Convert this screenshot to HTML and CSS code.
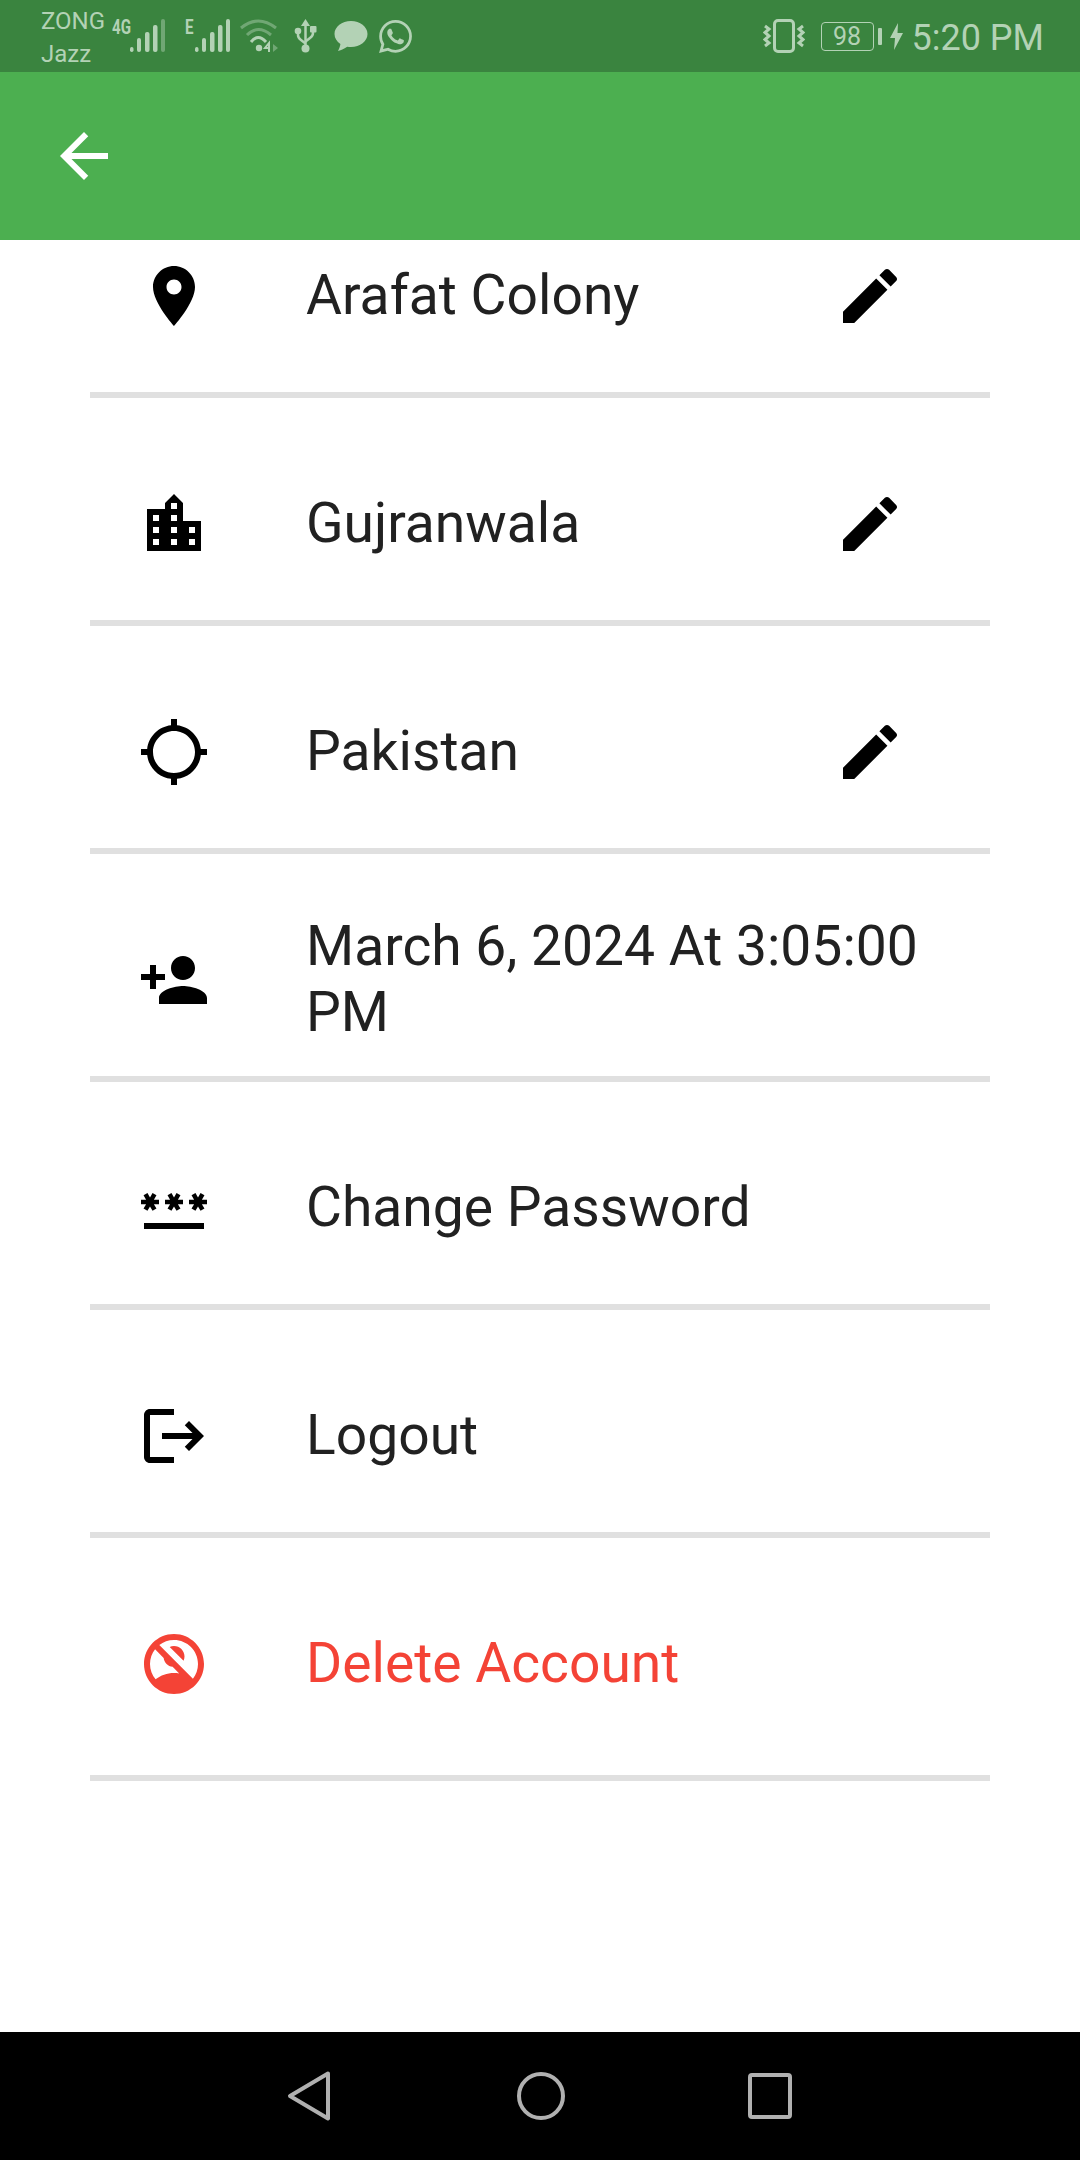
FILE: index.html
```html
<!DOCTYPE html>
<html lang="en">
  <head>
    <meta charset="UTF-8" />
    <meta name="viewport" content="width=device-width, initial-scale=1.0" />
    <title>Profile</title>
    <link rel="stylesheet" href="styles.css">
  </head>
  <body>
    <div class="screen">
      <!-- status bar -->
      <div class="status-bar">
        <div class="carrier">
          <span>ZONG</span>
          <span>Jazz</span>
        </div>
        <span class="net-type net-4g">4G</span>
        <svg width="35" height="34" viewBox="0 0 35 34">
          <rect x="0" y="28" width="3.500" height="5" rx="1.700" />
          <rect x="7" y="19" width="4" height="14" rx="2" />
          <rect x="15" y="13" width="4.500" height="20" rx="2" />
          <rect x="23" y="6" width="4.500" height="27" rx="2" />
          <rect x="31" y="0" width="4" height="33" rx="2" opacity="0.45" />
        </svg>
        <span class="net-type net-e">E</span>
        <svg class="sb-signal-b" width="35" height="34" viewBox="0 0 35 34">
          <rect x="0" y="28" width="3.500" height="5" rx="1.700" />
          <rect x="7" y="19" width="4" height="14" rx="2" />
          <rect x="15" y="13" width="4.500" height="20" rx="2" />
          <rect x="23" y="6" width="4.500" height="27" rx="2" />
          <rect x="31" y="0" width="4" height="33" rx="2" />
        </svg>
        <svg class="sb-wifi" width="38" height="34" viewBox="0 0 38 34">
          <g fill="none" stroke-width="3" class="sb-stroke">
            <path d="M1 9Q18 -5 36 9" opacity="0.45" />
            <path d="M7 16Q18 5 31 16" opacity="0.45" />
            <path d="M11 23Q18 14 26 23" />
          </g>
          <circle cx="19" cy="29" r="3.200" />
          <path d="M29 24v5h-4zM29 29v4" fill="none" stroke-width="2" class="sb-stroke" />
          <path d="M33 25l5 4-5 4z" opacity="0.45" />
        </svg>
        <svg class="sb-usb" width="23" height="34" viewBox="0 0 23 34">
          <path d="M11.500 0L16 7H7z" />
          <g fill="none" stroke-width="2.500" class="sb-stroke">
            <path d="M11.500 5v24" />
            <path d="M4 13v3q0 3 3 5l4.500 3.500" />
            <path d="M19 11v3q0 3-3 5l-4.500 3.500" />
          </g>
          <circle cx="4" cy="12" r="3.300" />
          <rect x="16" y="7" width="6.500" height="6.500" rx="1" />
          <circle cx="11.500" cy="29.500" r="4" />
        </svg>
        <svg class="sb-bubble" width="34" height="34" viewBox="0 0 33 34">
          <path d="M16.500 2C7.400 2 0 7.800 0 15c0 4 2.300 7.600 5.900 10-.3 2.300-1.200 4.800-2.400 7 3.300-.6 6.700-2.600 9.200-4.300 1.200.2 2.500.3 3.800.3C25.600 28 33 22.200 33 15S25.600 2 16.500 2z" />
        </svg>
        <svg class="sb-whatsapp" width="33" height="33" viewBox="0 0 24 24">
          <path d="M17.472 14.382c-.297-.149-1.758-.867-2.030-.967-.273-.099-.471-.148-.670.150-.197.297-.767.966-.940 1.164-.173.199-.347.223-.644.075-.297-.150-1.255-.463-2.390-1.475-.883-.788-1.480-1.761-1.653-2.059-.173-.297-.018-.458.130-.606.134-.133.298-.347.446-.520.149-.174.198-.298.298-.497.099-.198.050-.371-.025-.520-.075-.149-.669-1.612-.916-2.207-.242-.579-.487-.500-.669-.510-.173-.008-.371-.010-.570-.010-.198 0-.520.074-.792.372-.272.297-1.040 1.016-1.040 2.479 0 1.462 1.065 2.875 1.213 3.074.149.198 2.096 3.200 5.077 4.487.709.306 1.262.489 1.694.625.712.227 1.360.195 1.871.118.571-.085 1.758-.719 2.006-1.413.248-.694.248-1.289.173-1.413-.074-.124-.272-.198-.570-.347m-5.421 7.403h-.004a9.870 9.870 0 01-5.031-1.378l-.361-.214-3.741.982.998-3.648-.235-.374a9.860 9.860 0 01-1.510-5.260c.001-5.450 4.436-9.884 9.888-9.884 2.640 0 5.122 1.030 6.988 2.898a9.825 9.825 0 012.893 6.994c-.003 5.450-4.437 9.884-9.885 9.884m8.413-18.297A11.815 11.815 0 0012.050 0C5.495 0 .160 5.335.157 11.892c0 2.096.547 4.142 1.588 5.945L.057 24l6.305-1.654a11.882 11.882 0 005.683 1.448h.005c6.554 0 11.890-5.335 11.893-11.893a11.821 11.821 0 00-3.480-8.413z" />
        </svg>

        <div class="status-right">
          <svg width="42" height="34" viewBox="0 0 42 34">
            <rect x="11.500" y="1.500" width="19" height="31" rx="3.500" fill="none" stroke-width="3" class="sb-stroke" />
            <g fill="none" stroke-width="3" class="sb-stroke">
              <path d="M2 7l4 3-4 3.500 4 3.500-4 3.500 4 3.500-4 3" />
              <path d="M40 7l-4 3 4 3.500-4 3.500 4 3.500-4 3.500 4 3" />
            </g>
          </svg>
          <div class="battery">98</div>
          <div class="battery-nub"></div>
          <svg class="sb-bolt" width="13" height="27" viewBox="0 0 13 27">
            <path d="M8 0L0 15h5l-1 12 9-17H7.500z" />
          </svg>
          <span class="clock">5:20 PM</span>
        </div>
      </div>

      <!-- app bar -->
      <div class="app-bar">
        <svg class="back-icon" width="72" height="72" viewBox="0 0 24 24">
          <path d="M20 11H7.830l5.590-5.590L12 4l-8 8 8 8 1.410-1.410L7.830 13H20v-2z" />
        </svg>
      </div>

      <!-- list, scrolled a little so the first row sits under the app bar -->
      <div class="list">
        <div class="list-scroll">
          <div class="row">
            <svg class="row-icon" viewBox="0 0 24 24"><path d="M12 2C8.130 2 5 5.130 5 9c0 5.250 7 13 7 13s7-7.750 7-13c0-3.870-3.130-7-7-7zm0 9.500c-1.380 0-2.500-1.120-2.500-2.500s1.120-2.500 2.500-2.500 2.500 1.120 2.500 2.500-1.120 2.500-2.500 2.500z" /></svg>
            <span class="row-text">Arafat Colony</span>
            <svg class="edit-icon" viewBox="0 0 24 24"><path d="M3 17.250V21h3.750L17.810 9.940l-3.750-3.750L3 17.250zM20.710 7.040c.39-.39.39-1.020 0-1.410l-2.340-2.340c-.39-.39-1.020-.39-1.410 0l-1.830 1.830 3.750 3.750 1.830-1.830z" /></svg>
          </div>
          <div class="row">
            <svg class="row-icon" viewBox="0 0 24 24"><path d="M15 11V5l-3-3-3 3v2H3v14h18V11h-6zm-8 8H5v-2h2v2zm0-4H5v-2h2v2zm0-4H5V9h2v2zm6 8h-2v-2h2v2zm0-4h-2v-2h2v2zm0-4h-2V9h2v2zm0-4h-2V5h2v2zm6 12h-2v-2h2v2zm0-4h-2v-2h2v2z" /></svg>
            <span class="row-text">Gujranwala</span>
            <svg class="edit-icon" viewBox="0 0 24 24"><path d="M3 17.250V21h3.750L17.810 9.940l-3.750-3.750L3 17.250zM20.710 7.040c.39-.39.39-1.020 0-1.410l-2.340-2.340c-.39-.39-1.020-.39-1.410 0l-1.830 1.830 3.750 3.750 1.830-1.830z" /></svg>
          </div>
          <div class="row">
            <svg class="row-icon" viewBox="0 0 24 24"><path d="M20.940 11c-.46-4.170-3.770-7.480-7.940-7.940V1h-2v2.060C6.830 3.520 3.520 6.830 3.060 11H1v2h2.060c.46 4.170 3.770 7.480 7.940 7.940V23h2v-2.060c4.170-.46 7.480-3.770 7.940-7.940H23v-2h-2.060zM12 19c-3.870 0-7-3.130-7-7s3.130-7 7-7 7 3.130 7 7-3.130 7-7 7z" /></svg>
            <span class="row-text">Pakistan</span>
            <svg class="edit-icon" viewBox="0 0 24 24"><path d="M3 17.250V21h3.750L17.810 9.940l-3.750-3.750L3 17.250zM20.710 7.040c.39-.39.39-1.020 0-1.410l-2.340-2.340c-.39-.39-1.020-.39-1.410 0l-1.830 1.830 3.750 3.750 1.830-1.830z" /></svg>
          </div>
          <div class="row">
            <svg class="row-icon" viewBox="0 0 24 24"><path d="M15 12c2.210 0 4-1.790 4-4s-1.790-4-4-4-4 1.790-4 4 1.790 4 4 4zm-9-2V7H4v3H1v2h3v3h2v-3h3v-2H6zm9 4c-2.670 0-8 1.340-8 4v2h16v-2c0-2.660-5.330-4-8-4z" /></svg>
            <span class="row-text">March 6, 2024 At 3:05:00 PM</span>
          </div>
          <div class="row">
            <svg class="row-icon" viewBox="0 0 24 24"><path d="M2 17h20v2H2v-2zm1.150-4.050L4 11.470l.85 1.480 1.300-.75-.85-1.480H7v-1.500H5.300l.85-1.470L4.850 7 4 8.470 3.150 7l-1.300.75.85 1.470H1v1.500h1.700l-.85 1.480 1.300.75zm6.700-.75l1.300.75.85-1.480.85 1.480 1.300-.75-.85-1.480H15v-1.500h-1.700l.85-1.470-1.300-.75L12 8.470 11.150 7l-1.300.75.85 1.470H9v1.500h1.700l-.85 1.480zM23 9.220h-1.700l.85-1.470-1.300-.75L20 8.470 19.150 7l-1.300.75.85 1.470H17v1.500h1.700l-.85 1.480 1.300.75.85-1.480.85 1.480 1.300-.75-.85-1.480H23v-1.500z" /></svg>
            <span class="row-text">Change Password</span>
          </div>
          <div class="row">
            <svg class="row-icon" viewBox="0 0 24 24"><path d="M17 7l-1.410 1.410L18.170 11H8v2h10.170l-2.580 2.580L17 17l5-5zM4 5h8V3H4c-1.100 0-2 .9-2 2v14c0 1.100.9 2 2 2h8v-2H4V5z" /></svg>
            <span class="row-text">Logout</span>
          </div>
          <div class="row row-danger">
            <svg class="row-icon" viewBox="0 0 24 24"><path d="M15.180 10.940c.2-.44.32-.92.32-1.440C15.500 7.570 13.930 6 12 6c-.52 0-1 .12-1.440.32l4.620 4.620zM12 2C6.480 2 2 6.480 2 12s4.480 10 10 10 10-4.480 10-10S17.520 2 12 2zm0 13c-2.320 0-4.450.8-6.140 2.120C4.700 15.730 4 13.950 4 12c0-1.850.63-3.550 1.690-4.900l2.860 2.860c.21 1.560 1.430 2.790 2.990 2.990l2.200 2.200C13.170 15.050 12.590 15 12 15zm6.310 1.900L7.100 5.690C8.450 4.630 10.150 4 12 4c4.420 0 8 3.580 8 8 0 1.850-.63 3.540-1.690 4.900z" /></svg>
            <span class="row-text">Delete Account</span>
          </div>
        </div>
      </div>

      <!-- android nav bar -->
      <div class="nav-bar">
        <svg class="nav-back" width="44" height="52" viewBox="0 0 44 52">
          <path d="M41 3.500L3 26l38 22.500z" fill="none" stroke="#b0b0b0" stroke-width="4" stroke-linejoin="round" />
        </svg>
        <svg class="nav-home" width="50" height="50" viewBox="0 0 50 50">
          <circle cx="25" cy="25" r="22" fill="none" stroke="#b0b0b0" stroke-width="4" />
        </svg>
        <svg width="44" height="46" viewBox="0 0 44 46">
          <rect x="2" y="2" width="40" height="42" rx="2" fill="none" stroke="#b0b0b0" stroke-width="4" />
        </svg>
      </div>
    </div>
  </body>
</html>
```

FILE: styles.css
```css
* {
  box-sizing: border-box;
}

html,
body {
  margin: 0;
  padding: 0;
  background-color: #fff;
}

.screen {
  display: flex;
  flex-direction: column;
  width: 1080px;
  height: 2160px;
  font-family: Roboto, "Liberation Sans", sans-serif;
}

/* status bar */
.status-bar {
  display: flex;
  align-items: center;
  flex: none;
  height: 72px;
  padding-left: 41px;
  background-color: #3a843f;
  color: #b3d2b5;
}

.status-bar svg {
  flex: none;
  fill: #b3d2b5;
}

.sb-stroke {
  fill: none;
  stroke: #b3d2b5;
}

.carrier {
  display: flex;
  flex-direction: column;
  width: 71px;
  padding-top: 4px;
  font-size: 24px;
  line-height: 33px;
}

/* squeezed to look like the condensed status bar glyphs */
.net-type {
  flex: none;
  height: 18px;
  margin-bottom: 19px;
  font-size: 21px;
  font-weight: 700;
  line-height: 18px;
  transform-origin: left center;
}

.net-4g {
  width: 18px;
  transform: scaleX(0.72);
}

.net-e {
  width: 10px;
  margin-left: 20px;
  transform: scaleX(0.72);
}

.sb-wifi {
  margin-left: 10px;
}

.sb-usb {
  margin-left: 16px;
}

.sb-bubble {
  margin-left: 17px;
}

.sb-whatsapp {
  margin-left: 11px;
}

.status-right {
  display: flex;
  align-items: center;
  margin-left: auto;
  padding-right: 36px;
}

.battery {
  width: 53px;
  height: 29px;
  margin-left: 16px;
  border: 1.5px solid #b3d2b5;
  border-radius: 4px;
  font-size: 25px;
  line-height: 28px;
  text-align: center;
}

.battery-nub {
  width: 4px;
  height: 17px;
  margin-left: 4px;
  border-radius: 1px;
  background-color: #b3d2b5;
}

.sb-bolt {
  margin-left: 8px;
}

.clock {
  margin-left: 9px;
  padding-top: 3px;
  font-size: 36px;
}

/* app bar */
.app-bar {
  display: flex;
  align-items: center;
  flex: none;
  height: 168px;
  padding-left: 48px;
  background-color: #4caf50;
}

.back-icon {
  fill: #fff;
}

/* list */
.list {
  flex: 1;
  overflow: hidden;
}

.list-scroll {
  margin-top: -70px;
  padding: 0 90px;
}

.row {
  display: flex;
  align-items: center;
  height: 228px;
  padding: 54px 0 24px;
  border-bottom: 6px solid #e0e0e0;
  color: #212121;
}

.row-icon {
  flex: none;
  width: 72px;
  height: 72px;
  margin-left: 48px;
  margin-right: 96px;
  fill: #000;
}

.row-text {
  flex: 1;
  margin-top: -2px;
  font-size: 55.2px;
  line-height: 66px;
}

.edit-icon {
  flex: none;
  width: 72px;
  height: 72px;
  margin-right: 84px;
  fill: #000;
}

.row-danger {
  height: 243px;
  padding-bottom: 39px;
  color: #f44336;
}

.row-danger .row-icon {
  fill: #f44336;
}

/* nav bar */
.nav-bar {
  display: flex;
  align-items: center;
  justify-content: center;
  flex: none;
  height: 128px;
  padding-right: 2px;
  background-color: #000;
}

.nav-back {
  margin-right: 185px;
}

.nav-home {
  margin-right: 182px;
}
```
